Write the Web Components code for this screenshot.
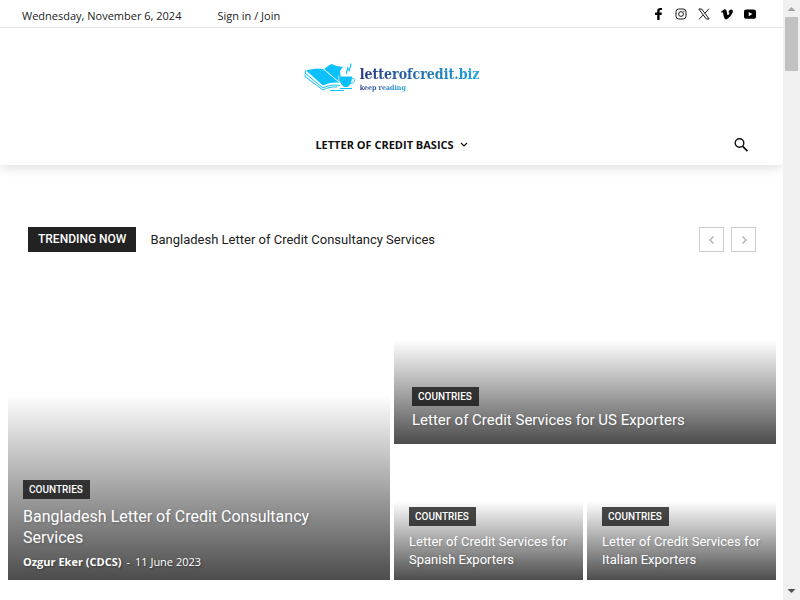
<!DOCTYPE html>
<html lang="en">
<head>
<meta charset="utf-8">
<meta name="viewport" content="width=device-width, initial-scale=1">
<title>Letter of Credit</title>
<style>
  body {
    margin: 0;
    background: #fff;
    color: #111;
    font-family: "Open Sans", "Noto Sans", sans-serif;
  }
</style>
</head>
<body>
<loc-shell>
  <loc-topbar date="Wednesday, November 6, 2024"></loc-topbar>
  <loc-header></loc-header>
  <loc-trending>Bangladesh Letter of Credit Consultancy Services</loc-trending>
  <loc-grid>
    <loc-card slot="lead" size="large" category="Countries" author="Ozgur Eker (CDCS)" date="11 June 2023">Bangladesh Letter of Credit Consultancy Services</loc-card>
    <loc-card slot="wide" size="medium" category="Countries">Letter of Credit Services for US Exporters</loc-card>
    <loc-card slot="small" size="small" category="Countries">Letter of Credit Services for Spanish Exporters</loc-card>
    <loc-card slot="small" size="small" category="Countries">Letter of Credit Services for Italian Exporters</loc-card>
  </loc-grid>
</loc-shell>

<script>
(function () {
  'use strict';

  // Page column plus the scroll rail on its right.
  class LocShell extends HTMLElement {
    connectedCallback() {
      if (this.shadowRoot) return;
      this.attachShadow({ mode: 'open' }).innerHTML = `
        <style>
          :host { display: flex; min-height: 100vh; }
          main { flex: 1; min-width: 0; }
          .rail {
            display: flex;
            flex-direction: column;
            align-items: center;
            flex: 0 0 17px;
            background: #f0f0f0;
          }
          .rail svg { display: block; width: 17px; height: 17px; }
          .thumb { width: 13px; height: 54px; background: #c1c1c1; }
          .track { flex: 1; }
        </style>
        <main><slot></slot></main>
        <div class="rail" aria-hidden="true">
          <svg viewBox="0 0 17 17"><path d="M4.500 11h8l-4-4z" fill="#a3a3a3"/></svg>
          <div class="thumb"></div>
          <div class="track"></div>
          <svg viewBox="0 0 17 17"><path d="M4.500 6h8l-4 4z" fill="#505050"/></svg>
        </div>`;
    }
  }

  var SOCIAL = [
    { label: 'Facebook', art: '<path d="M6.200 13V7.900H4V5.600h2.200V4c0-2 1.200-3 3-3h1.700v2.100H9.700c-.8 0-1.100.4-1.100 1.100v1.400h2.300l-.4 2.300H8.600V13z"/>' },
    { label: 'Instagram', art: '<g fill="none" stroke="#000" stroke-width=".9"><rect x="2" y="2" width="10" height="10" rx="2.800"/><circle cx="7" cy="7" r="2.400"/></g><circle cx="9.900" cy="4.100" r=".6"/>' },
    { label: 'Twitter', art: '<path d="M1.800 2h2.900l7.500 10H9.300z" fill="none" stroke="#000" stroke-width=".9"/><path d="M12 1.700 7.800 6.400M6.300 7.900 2 12.400" fill="none" stroke="#000" stroke-width=".9"/>' },
    { label: 'Vimeo', art: '<path d="M1 4.800C2.300 3.600 3.700 2.300 4.600 2.200c1.300-.1 1.900.8 2.200 2.500.3 1.800.6 3.600 1.100 3.600.4 0 1.500-1.700 1.500-2.500 0-.7-.5-.8-1.100-.5.5-2 1.800-3 3.200-2.900 1.200.1 1.500.9 1.300 2.300C12.500 6.900 8.200 12.400 6 12.400c-1.500 0-1.900-1.900-2.300-3.400-.5-2-.7-3.700-1-3.700-.2 0-.6.3-1 .5z"/>' },
    { label: 'Youtube', art: '<path fill-rule="evenodd" d="M3.500 2.500h7C12.200 2.500 13 3.300 13 4.800v4.600c0 1.500-.8 2.300-2.500 2.300h-7C1.800 11.700 1 10.900 1 9.400V4.800c0-1.500.8-2.300 2.500-2.300zM5.700 4.900v4.300L9.400 7z"/>' }
  ];

  class LocTopbar extends HTMLElement {
    connectedCallback() {
      if (this.shadowRoot) return;
      var links = SOCIAL.map(function (item) {
        return '<a href="#" aria-label="' + item.label + '">' +
          '<svg viewBox="0 0 14 14" aria-hidden="true">' + item.art + '</svg></a>';
      }).join('');
      this.attachShadow({ mode: 'open' }).innerHTML = `
        <style>
          :host {
            display: flex;
            align-items: center;
            justify-content: space-between;
            padding: 0 26px 0 22px;
            border-bottom: 1px solid #e6e6e6;
            color: #222;
            font-size: 11px;
            line-height: 27px;
          }
          .info { display: flex; gap: 36px; padding-top: 4px; line-height: 23px; }
          .social { display: flex; gap: 9px; }
          a { color: inherit; text-decoration: none; }
          svg { display: block; width: 14px; height: 14px; }
        </style>
        <div class="info"><span>${this.getAttribute('date')}</span><a href="#">Sign in / Join</a></div>
        <nav class="social" aria-label="Social">${links}</nav>`;
    }
  }

  class LocLogo extends HTMLElement {
    connectedCallback() {
      if (this.shadowRoot) return;
      this.attachShadow({ mode: 'open' }).innerHTML = `
        <style>
          :host { display: block; }
          a { display: flex; align-items: center; gap: 4px; text-decoration: none; }
          svg { display: block; width: 52px; height: 30px; }
          .words { display: flex; flex-direction: column; align-items: flex-start; padding-top: 3px; }
          .words span {
            background: linear-gradient(90deg, #2b3a86, #1fa4dc);
            background-clip: text;
            -webkit-background-clip: text;
            color: transparent;
            font-family: "DejaVu Serif Condensed", "DejaVu Serif", serif;
            font-weight: bold;
          }
          .name { font-size: 14px; line-height: 18px; }
          .tag { font-size: 7px; line-height: 9px; }
        </style>
        <a href="#">
          <svg viewBox="0 0 52 30" aria-hidden="true">
            <g fill="#0cc0fb">
              <path d="M2 8.500C8 6.500 14 6.500 19 7l17 14c-6-1-11 0-17 2.500z"/>
              <path d="M20 7c3-2 5-4.500 8-5 3 2 7 2.500 11 3l-3 4 1.500 11.500L35 20z"/>
              <path d="M35.500 14.500H48c0 5-1.500 8.500-4.500 10.500H40c-3-2-4.500-5.500-4.500-10.500z"/>
            </g>
            <g fill="none" stroke="#0cc0fb">
              <path d="M2 8.500 1 11l18 15c6-3 11-3.500 17-2.500"/>
              <path d="M1 12.500v2L19 28c5-2.500 9-3.500 14-3"/>
              <path d="M47.500 16.500c4.500-1 4 5-1.500 5"/>
              <path d="M36 26.500h12M26 28.500h14"/>
              <path d="M43 12c-2.500-3 2.500-3.500.5-7M45.500 9.500c-2.500-3 3-3.500 1-8" stroke-width="1.200"/>
            </g>
            <g fill="none" stroke="#fff" stroke-width=".7">
              <path d="m19.500 7 15.500 13"/>
              <path d="M34.800 13.500v3c0 3 1 6 3 8.500"/>
            </g>
          </svg>
          <div class="words"><span class="name">letterofcredit.biz</span><span class="tag">keep reading</span></div>
        </a>`;
    }
  }

  class LocHeader extends HTMLElement {
    connectedCallback() {
      if (this.shadowRoot) return;
      this.attachShadow({ mode: 'open' }).innerHTML = `
        <style>
          :host {
            display: block;
            padding-top: 34px;
            box-shadow: 0 2px 12px rgba(0, 0, 0, .14);
            clip-path: inset(0 0 -20px 0);
          }
          .brand { display: flex; justify-content: center; height: 63px; align-items: flex-start; }
          .bar {
            display: grid;
            grid-template-columns: 1fr auto 1fr;
            align-items: center;
            height: 40px;
            padding: 0 34px;
          }
          nav { grid-column: 2; }
          nav a {
            display: flex;
            align-items: center;
            gap: 6px;
            color: #111;
            font-size: 11px;
            font-weight: 700;
            line-height: 16px;
            text-decoration: none;
            text-transform: uppercase;
          }
          nav svg { width: 8px; height: 8px; }
          button {
            justify-self: end;
            padding: 0;
            border: 0;
            background: none;
            cursor: pointer;
          }
          button svg { display: block; width: 16px; height: 16px; }
          svg { fill: none; stroke: #111; }
        </style>
        <div class="brand"><loc-logo></loc-logo></div>
        <div class="bar">
          <nav><a href="#">Letter of Credit Basics
            <svg viewBox="0 0 8 8" aria-hidden="true"><path d="m1 2 3 3 3-3" stroke-width="1.200"/></svg>
          </a></nav>
          <button type="button" aria-label="Search">
            <svg viewBox="0 0 16 16" aria-hidden="true"><circle cx="6.500" cy="6" r="4.300" stroke-width="1.400"/><path d="m9.500 9.100 5 5" stroke-width="1.800"/></svg>
          </button>
        </div>`;
    }
  }

  class LocTrending extends HTMLElement {
    connectedCallback() {
      if (this.shadowRoot) return;
      this.attachShadow({ mode: 'open' }).innerHTML = `
        <style>
          :host {
            display: flex;
            align-items: center;
            margin: 62px 27px 0 28px;
            font-family: Roboto, sans-serif;
          }
          .label {
            padding: 0 10px;
            background: #222;
            color: #fff;
            font-size: 12px;
            font-weight: 500;
            line-height: 25px;
            text-transform: uppercase;
          }
          .title {
            flex: 1;
            padding-left: 14px;
            color: #222;
            font-size: 13px;
            line-height: 25px;
            text-decoration: none;
          }
          .arrows { display: flex; gap: 7px; }
          button {
            display: grid;
            place-items: center;
            width: 25px;
            height: 25px;
            padding: 0;
            border: 1px solid #ccc;
            background: #fff;
            cursor: pointer;
          }
          svg { width: 8px; height: 8px; fill: none; stroke: #b0b0b0; stroke-width: 1.300; }
        </style>
        <span class="label">Trending now</span>
        <a class="title" href="#"><slot></slot></a>
        <div class="arrows">
          <button type="button" aria-label="Previous"><svg viewBox="0 0 8 8"><path d="M5.500.5 2 4l3.500 3.500"/></svg></button>
          <button type="button" aria-label="Next"><svg viewBox="0 0 8 8"><path d="M2.500.5 6 4 2.500 7.500"/></svg></button>
        </div>`;
    }
  }

  class LocGrid extends HTMLElement {
    connectedCallback() {
      if (this.shadowRoot) return;
      this.attachShadow({ mode: 'open' }).innerHTML = `
        <style>
          :host {
            display: grid;
            grid-template-columns: 1fr 1fr;
            gap: 4px;
            margin: 62px 7px 20px 8px;
          }
          .side { display: grid; grid-template-rows: 130px 132px; gap: 4px; }
          .pair { display: grid; grid-template-columns: 1fr 1fr; gap: 4px; }
          ::slotted(*) { min-width: 0; }
        </style>
        <slot name="lead"></slot>
        <div class="side">
          <slot name="wide"></slot>
          <div class="pair"><slot name="small"></slot></div>
        </div>`;
    }
  }

  class LocCard extends HTMLElement {
    connectedCallback() {
      if (this.shadowRoot) return;
      var author = this.getAttribute('author');
      var meta = author
        ? '<div class="meta"><a class="author" href="#">' + author + '</a><span>-</span><time>' +
          this.getAttribute('date') + '</time></div>'
        : '';
      this.attachShadow({ mode: 'open' }).innerHTML = `
        <style>
          :host {
            --shade: 70%;
            display: flex;
            flex-direction: column;
            justify-content: flex-end;
            align-items: flex-start;
            box-sizing: border-box;
            padding: 0 15px 11px;
            background: linear-gradient(rgba(0, 0, 0, 0), rgba(0, 0, 0, .7)) bottom / 100% var(--shade) no-repeat;
            color: #fff;
            font-family: Roboto, sans-serif;
          }
          :host([size="large"]) { padding: 0 15% 10px 15px; }
          :host([size="medium"]) { --shade: 80%; padding: 0 18px 14px; }
          :host([size="small"]) { --shade: 60%; }
          a { color: inherit; text-decoration: none; }
          .category {
            padding: 0 7px 0 6px;
            background: rgba(0, 0, 0, .7);
            font-size: 10px;
            font-weight: 500;
            line-height: 19px;
            text-transform: uppercase;
          }
          h3 {
            margin: 7px 0 0;
            font-size: 16px;
            font-weight: 400;
            line-height: 21px;
            text-shadow: 1px 1px 3px rgba(0, 0, 0, .2);
          }
          :host([size="medium"]) h3 { margin-top: 4px; font-size: 15px; line-height: 20px; }
          :host([size="small"]) h3 { font-size: 13px; line-height: 18px; }
          .meta {
            display: flex;
            gap: 5px;
            margin-top: 6px;
            font-family: "Open Sans", sans-serif;
            font-size: 11px;
            line-height: 16px;
            text-shadow: 1px 1px 2px rgba(0, 0, 0, .4);
          }
          .author { font-weight: 700; }
        </style>
        <a class="category" href="#">${this.getAttribute('category')}</a>
        <h3><a href="#"><slot></slot></a></h3>
        ${meta}`;
    }
  }

  customElements.define('loc-shell', LocShell);
  customElements.define('loc-topbar', LocTopbar);
  customElements.define('loc-logo', LocLogo);
  customElements.define('loc-header', LocHeader);
  customElements.define('loc-trending', LocTrending);
  customElements.define('loc-grid', LocGrid);
  customElements.define('loc-card', LocCard);
})();
</script>
</body>
</html>
